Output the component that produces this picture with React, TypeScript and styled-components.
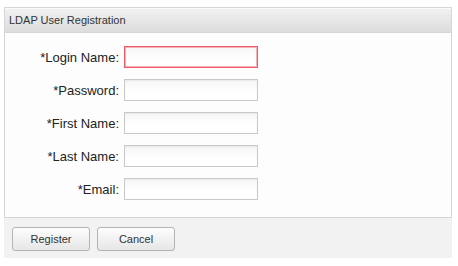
import { Fragment } from "react";
import styled, { createGlobalStyle } from "styled-components";

const GlobalStyle = createGlobalStyle`
  body {
    margin: 0;
    background: #ffffff;
    font-family: "Liberation Sans", Arial, sans-serif;
  }
`;

const Panel = styled.div`
  margin: 7px 0 0 4px;
  width: 448px;
  box-sizing: border-box;
`;

const Header = styled.div`
  height: 26px;
  box-sizing: border-box;
  display: flex;
  align-items: center;
  padding: 0 0 0 4px;
  border: 1px solid #d6d6d6;
  background: linear-gradient(#f2f2f2, #dcdcdc);
  box-shadow: inset 0 1px 0 #fafafa;
  font-size: 11px;
  color: #333333;
`;

const Body = styled.div`
  border: 1px solid #d6d6d6;
  border-top: none;
  background: #fdfdfd;
  padding: 13px 0 17px 0;
  display: grid;
  grid-template-columns: 114px 134px;
  column-gap: 5px;
  row-gap: 11px;
  align-items: center;
`;

const Label = styled.label`
  font-size: 13px;
  color: #222222;
  text-align: right;
`;

const Input = styled.input<{ $invalid?: boolean }>`
  box-sizing: border-box;
  width: 134px;
  height: 22px;
  margin: 0;
  padding: 2px 4px;
  font-family: inherit;
  font-size: 12px;
  outline: none;
  border: 1px solid ${(p) => (p.$invalid ? "#ee5a66" : "#c9c9c9")};
  box-shadow: ${(p) =>
    p.$invalid ? "inset 0 0 0 1px #f7b3b9" : "inset 0 1px 1px #ececec"};
  background: linear-gradient(#f5f5f5, #ffffff 60%);
`;

const Footer = styled.div`
  background: #f2f2f2;
  padding: 9px 0 7px 8px;
  display: flex;
  gap: 7px;
`;

const Button = styled.button`
  width: 78px;
  height: 24px;
  box-sizing: border-box;
  border: 1px solid #b4b4b4;
  border-radius: 3px;
  background: linear-gradient(#fdfdfd, #e6e6e6);
  font-family: inherit;
  font-size: 11px;
  color: #333333;
  padding: 0;
  cursor: pointer;
`;

const fields = [
  { label: "*Login Name:", invalid: true },
  { label: "*Password:", type: "password" },
  { label: "*First Name:" },
  { label: "*Last Name:" },
  { label: "*Email:" },
];

export default function App() {
  return (
    <>
      <GlobalStyle />
      <Panel>
        <Header>LDAP User Registration</Header>
        <Body>
          {fields.map((f) => (
            <Fragment key={f.label}>
              <Label>{f.label}</Label>
              <Input type={f.type || "text"} $invalid={f.invalid} />
            </Fragment>
          ))}
        </Body>
        <Footer>
          <Button>Register</Button>
          <Button>Cancel</Button>
        </Footer>
      </Panel>
    </>
  );
}
